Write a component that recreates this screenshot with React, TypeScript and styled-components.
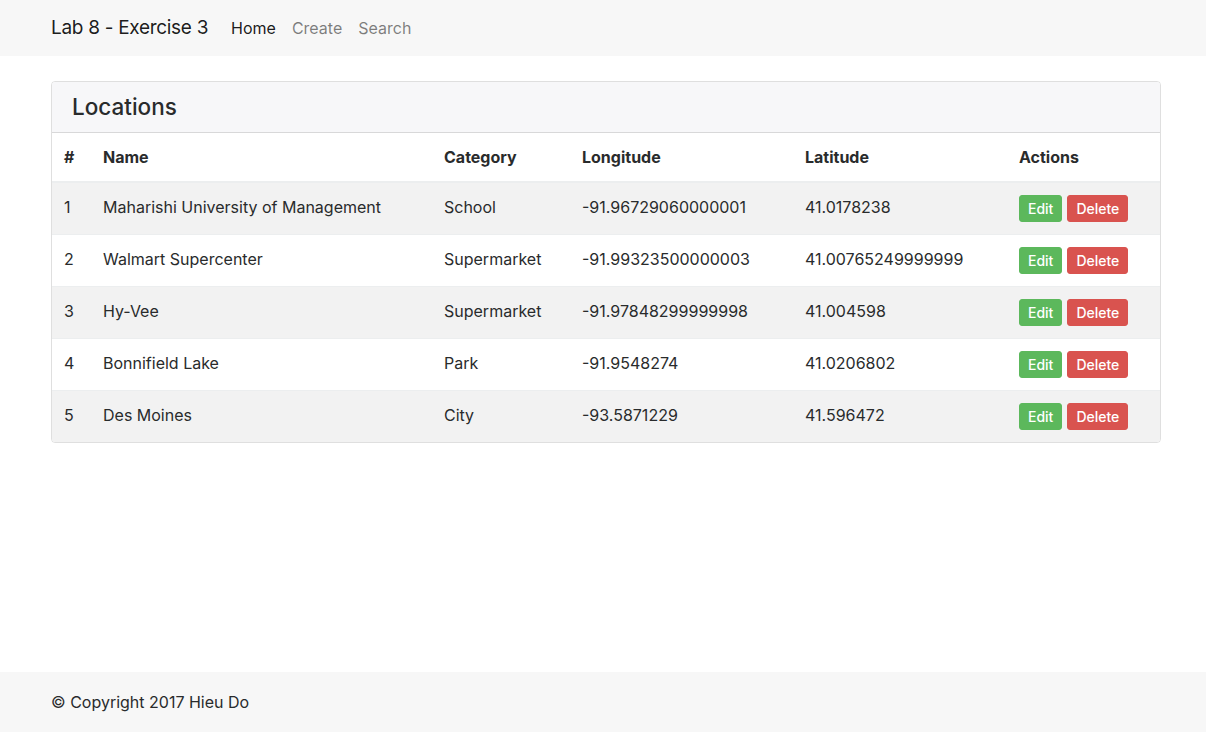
import React from "react";
import styled, { createGlobalStyle } from "styled-components";

const Global = createGlobalStyle`
  html, body { margin: 0; padding: 0; }
  body {
    font-family: Inter, "Noto Sans", "Liberation Sans", sans-serif;
    font-size: 16px;
    line-height: 1.5;
    color: #292b2c;
    background: #fff;
  }
  * { box-sizing: border-box; }
`;

const Page = styled.div`
  min-height: 732px;
  display: flex;
  flex-direction: column;
`;

const Navbar = styled.nav`
  height: 56px;
  background: #f7f7f7;
  display: flex;
  align-items: center;
`;

const Container = styled.div`
  width: 1140px;
  padding: 0 12px 0 18px;
  margin: 0 auto;
`;

const NavInner = styled(Container)`
  display: flex;
  align-items: baseline;
  padding-top: 1px;
`;

const Brand = styled.a`
  font-size: 19px;
  color: rgba(0, 0, 0, 0.9);
  margin-right: 15px;
  text-decoration: none;
  letter-spacing: -0.3px;
`;

const NavLink = styled.a<{ $active?: boolean }>`
  font-size: 16px;
  padding: 0 8px;
  color: ${(p) => (p.$active ? "rgba(0,0,0,0.9)" : "rgba(0,0,0,0.5)")};
  text-decoration: none;
`;

const Main = styled(Container)`
  flex: 1;
  padding-top: 25px;
`;

const Card = styled.div`
  border: 1px solid rgba(0, 0, 0, 0.125);
  border-radius: 4px;
  overflow: hidden;
`;

const CardHeader = styled.div`
  background: #f7f7f9;
  border-bottom: 1px solid rgba(0, 0, 0, 0.125);
  padding: 10px 20px;
  height: 51px;
  display: flex;
  align-items: center;
`;

const Title = styled.h4`
  margin: 0;
  font-size: 22.5px;
  font-weight: 500;
  line-height: 1.1;
`;

const Table = styled.table`
  width: 100%;
  border-collapse: collapse;
  table-layout: fixed;
`;

const Th = styled.th<{ $w: number }>`
  width: ${(p) => p.$w}px;
  text-align: left;
  font-weight: 700;
  padding: 12px 12px 12px;
  border-bottom: 2px solid #eceeef;
  vertical-align: bottom;
  line-height: 24px;
`;

const Tr = styled.tr<{ $striped: boolean }>`
  background: ${(p) => (p.$striped ? "#f2f2f2" : "#fff")};
`;

const Td = styled.td`
  padding: 12px;
  border-top: 1px solid #eceeef;
  vertical-align: top;
  line-height: 24px;
  white-space: nowrap;
`;

const Actions = styled.div`
  display: flex;
  gap: 5px;
`;

const Btn = styled.button<{ $variant: "success" | "danger" }>`
  font-family: inherit;
  font-size: 14px;
  font-weight: 500;
  line-height: 21px;
  height: 27px;
  padding: 2px 8px;
  border-radius: 3px;
  color: #fff;
  border: 1px solid ${(p) => (p.$variant === "success" ? "#5cb85c" : "#d9534f")};
  background: ${(p) => (p.$variant === "success" ? "#5cb85c" : "#d9534f")};
  cursor: pointer;
`;

const Footer = styled.footer`
  height: 60px;
  background: #f7f7f7;
  display: flex;
  align-items: center;
`;

const rows = [
  ["1", "Maharishi University of Management", "School", "-91.96729060000001", "41.0178238"],
  ["2", "Walmart Supercenter", "Supermarket", "-91.99323500000003", "41.00765249999999"],
  ["3", "Hy-Vee", "Supermarket", "-91.97848299999998", "41.004598"],
  ["4", "Bonnifield Lake", "Park", "-91.9548274", "41.0206802"],
  ["5", "Des Moines", "City", "-93.5871229", "41.596472"],
];

const cols: [string, number][] = [
  ["#", 39],
  ["Name", 341],
  ["Category", 138],
  ["Longitude", 223],
  ["Latitude", 214],
  ["Actions", 153],
];

export default function App() {
  return (
    <Page>
      <Global />
      <Navbar>
        <NavInner>
          <Brand href="#">Lab 8 - Exercise 3</Brand>
          <NavLink $active href="#">Home</NavLink>
          <NavLink href="#">Create</NavLink>
          <NavLink href="#">Search</NavLink>
        </NavInner>
      </Navbar>
      <Main>
        <Card>
          <CardHeader>
            <Title>Locations</Title>
          </CardHeader>
          <Table>
            <thead>
              <tr>
                {cols.map(([c, w]) => (
                  <Th key={c} $w={w}>{c}</Th>
                ))}
              </tr>
            </thead>
            <tbody>
              {rows.map((r, i) => (
                <Tr key={r[0]} $striped={i % 2 === 0}>
                  {r.map((c, j) => (
                    <Td key={j}>{c}</Td>
                  ))}
                  <Td>
                    <Actions>
                      <Btn $variant="success">Edit</Btn>
                      <Btn $variant="danger">Delete</Btn>
                    </Actions>
                  </Td>
                </Tr>
              ))}
            </tbody>
          </Table>
        </Card>
      </Main>
      <Footer>
        <Container>© Copyright 2017 Hieu Do</Container>
      </Footer>
    </Page>
  );
}
